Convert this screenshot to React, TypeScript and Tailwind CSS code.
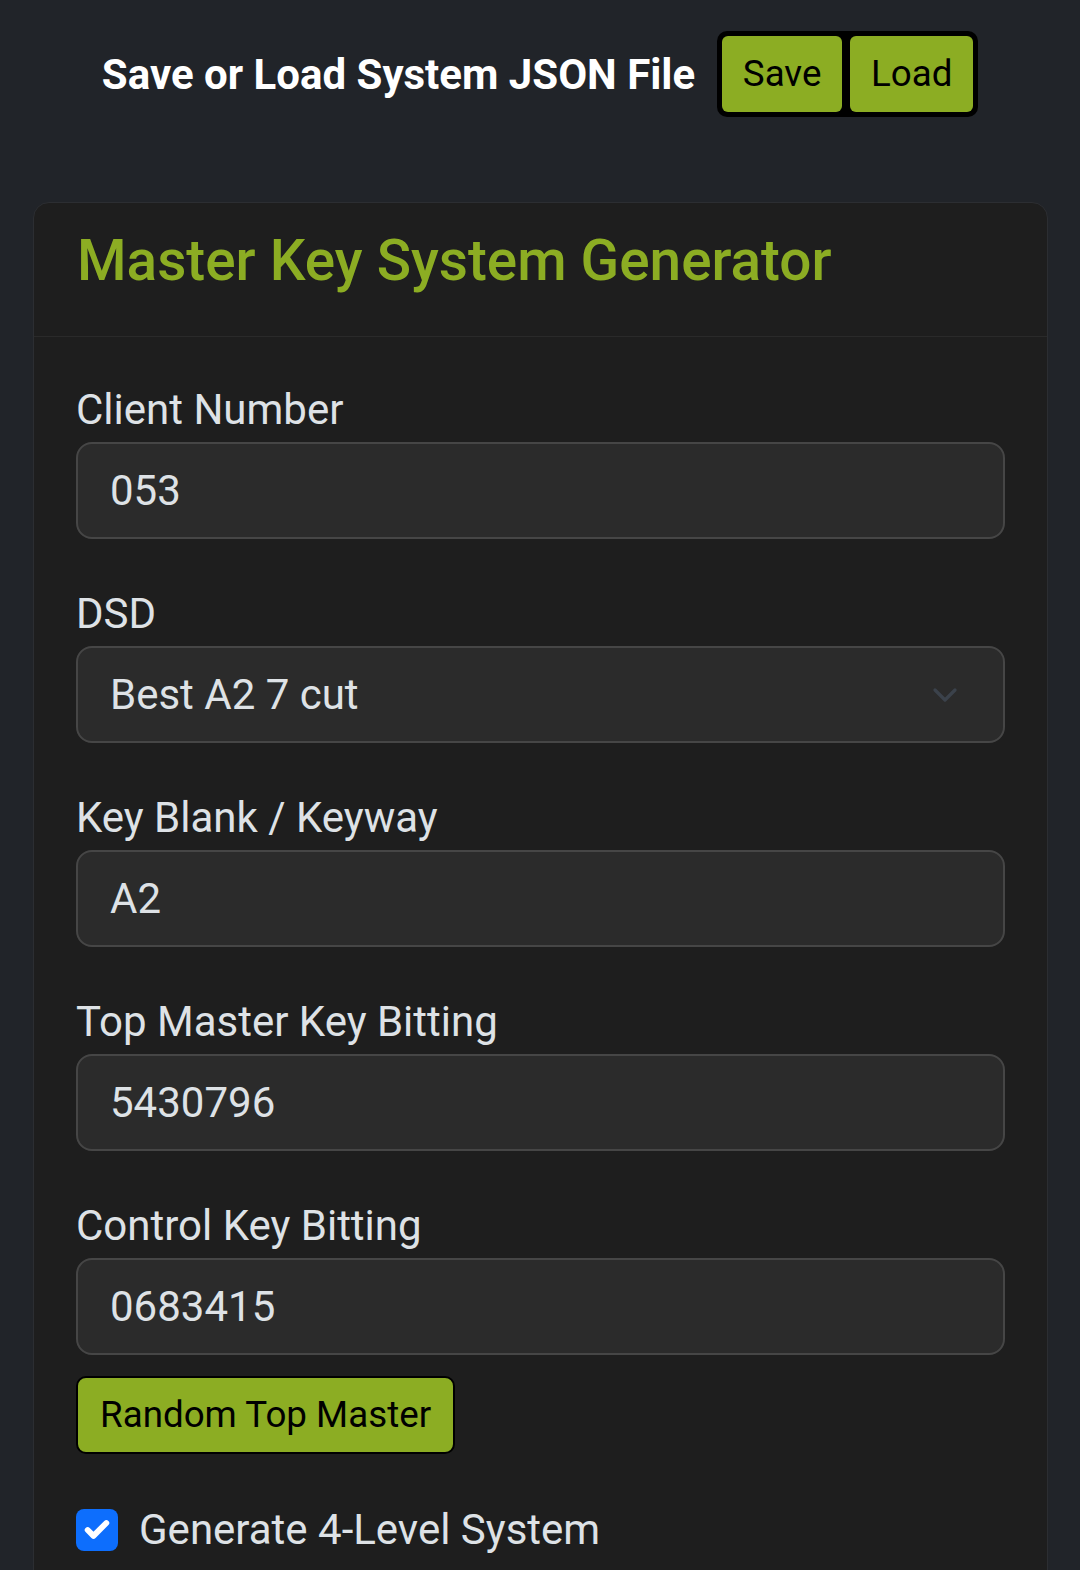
import { ChevronDown, Check } from 'lucide-react'

const fields = [
  { label: 'Client Number', value: '053' },
  { label: 'DSD', value: 'Best A2 7 cut', select: true },
  { label: 'Key Blank / Keyway', value: 'A2' },
  { label: 'Top Master Key Bitting', value: '5430796' },
  { label: 'Control Key Bitting', value: '0683415' },
]

function Field({ label, value, select }: { label: string; value: string; select?: boolean }) {
  return (
    <div>
      <label className="mb-[8px] block text-[42px] leading-[48px] text-[#dee2e6]">{label}</label>
      <div className="flex h-[97px] items-center justify-between rounded-[16px] border-2 border-[#464646] bg-[#2b2b2b] pl-[32px] pr-[38px] text-[42px] text-[#dee2e6]">
        <span>{value}</span>
        {select && <ChevronDown size={40} strokeWidth={2} className="text-[#3b424b]" />}
      </div>
    </div>
  )
}

export default function App() {
  return (
    <main className="min-h-[1570px] bg-[#212429] font-['Roboto',sans-serif]">
      <header className="flex items-center justify-center gap-[22px] pt-[31px]">
        <h1 className="text-[42px] font-bold text-white">Save or Load System JSON File</h1>
        <div className="flex gap-[8px] rounded-[10px] bg-black p-[5px]">
          <button className="h-[76px] w-[120px] rounded-[6px] bg-[#8cad23] text-[36.75px] text-black">Save</button>
          <button className="h-[76px] w-[123px] rounded-[6px] bg-[#8cad23] text-[36.75px] text-black">Load</button>
        </div>
      </header>

      <section className="ml-[33px] mr-[32px] mt-[85px] overflow-hidden rounded-t-[16px] border border-[#2c2e32] bg-[#1e1e1e]">
        <div className="flex h-[134px] items-center border-b border-[#2a2a2a] px-[43px] pb-[18px]">
          <h2 className="text-[56.7px] font-medium text-[#8cad23]">Master Key System Generator</h2>
        </div>
        <div className="flex flex-col gap-[51px] px-[42px] pt-[49px]">
          {fields.map((f) => (
            <Field key={f.label} {...f} />
          ))}
        </div>
        <div className="px-[42px] pb-[40px]">
          <button className="mt-[21px] h-[78px] rounded-[10px] border-2 border-black bg-[#8cad23] px-[22px] text-[36.75px] text-black">
            Random Top Master
          </button>
          <div className="mt-[44px] flex items-center gap-[21px]">
            <span className="flex size-[42px] items-center justify-center rounded-[8px] bg-[#0d6efd]">
              <Check size={28} strokeWidth={5} className="text-white" />
            </span>
            <span className="text-[42px] text-[#dee2e6]">Generate 4-Level System</span>
          </div>
        </div>
      </section>
    </main>
  )
}
